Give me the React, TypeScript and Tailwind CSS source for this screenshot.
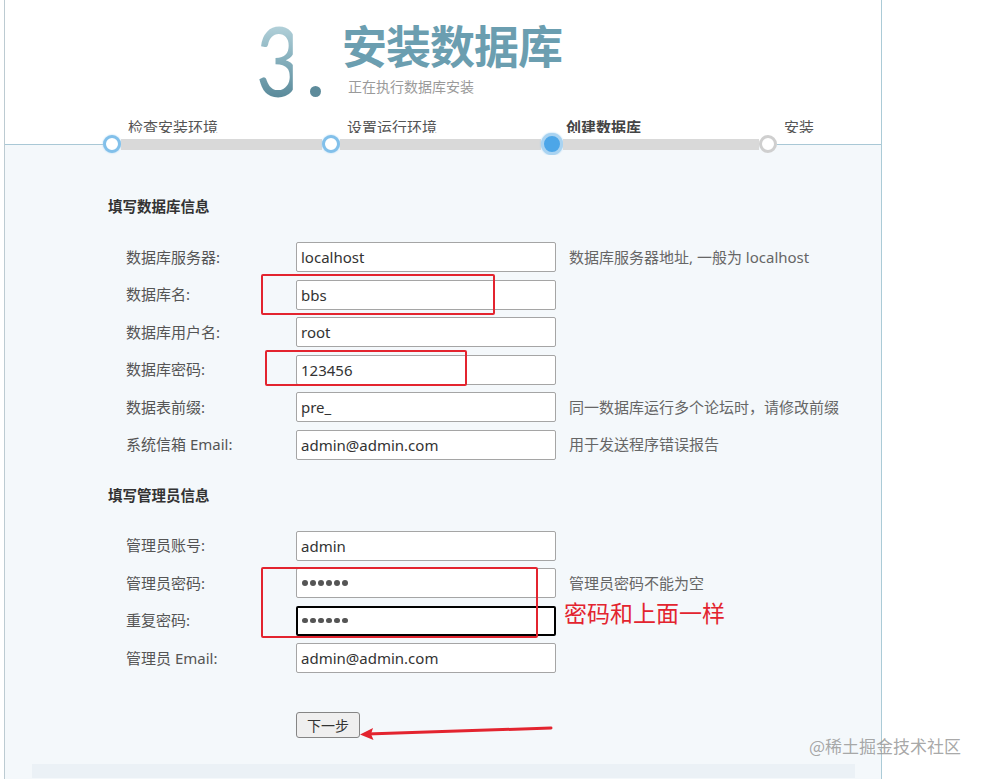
import React from 'react';

const DB_ROWS = [
  { label: '数据库服务器:', value: 'localhost', hint: '数据库服务器地址, 一般为 localhost' },
  { label: '数据库名:', value: 'bbs', hint: '' },
  { label: '数据库用户名:', value: 'root', hint: '' },
  { label: '数据库密码:', value: '123456', hint: '' },
  { label: '数据表前缀:', value: 'pre_', hint: '同一数据库运行多个论坛时，请修改前缀' },
  { label: '系统信箱 Email:', value: 'admin@admin.com', hint: '用于发送程序错误报告' },
];

const ADMIN_ROWS = [
  { label: '管理员账号:', value: 'admin', hint: '', password: false, focused: false },
  { label: '管理员密码:', value: '123456', hint: '管理员密码不能为空', password: true, focused: false },
  { label: '重复密码:', value: '123456', hint: '', password: true, focused: true },
  { label: '管理员 Email:', value: 'admin@admin.com', hint: '', password: false, focused: false },
];

const STEPS = [
  { label: '检查安装环境', w: 'w-[219px]', bold: false },
  { label: '设置运行环境', w: 'w-[219px]', bold: false },
  { label: '创建数据库', w: 'w-[218px]', bold: true },
  { label: '安装', w: 'w-[80px]', bold: false },
];

type Row = { label: string; value: string; hint: string; password?: boolean; focused?: boolean };

function FormRow({ label, value, hint, password, focused }: Row) {
  const box = `w-[260px] h-[30px] bg-white rounded-[2px] flex items-center ${
    focused ? 'border-2 border-black px-[3px]' : 'border border-[#a5a5a5] px-[4px]'
  }`;
  return (
    <div className="flex items-center h-[30px]">
      <span className="w-[170px] text-[15px] text-[#555]">{label}</span>
      {password ? (
        <div className={box} aria-label={label}>
          <div className="flex gap-[2.5px] pl-[1px]">
            {value.split('').map((_, i) => (
              <span key={i} className="w-[5.5px] h-[5.5px] rounded-full bg-[#555]" />
            ))}
          </div>
        </div>
      ) : (
        <input
          readOnly
          type="text"
          defaultValue={value}
          className={`${box} text-[15px] text-[#333] outline-none`}
        />
      )}
      {hint && <span className="ml-[13px] text-[15px] text-[#666]">{hint}</span>}
    </div>
  );
}

function Circle({ kind }: { kind: 'done' | 'active' | 'todo' }) {
  if (kind === 'active')
    return (
      <div className="w-[22px] h-[22px] rounded-full border-[3px] border-[#a9d3f1] bg-[#4ca6e8] shrink-0 shadow-[0_0_2px_#8cc6ee]" />
    );
  if (kind === 'todo')
    return <div className="w-[18px] h-[18px] rounded-full border-[3px] border-[#cfcfcf] bg-white shrink-0" />;
  return (
    <div className="w-[18px] h-[18px] rounded-full border-[3px] border-[#82c0ea] bg-white shrink-0 shadow-[0_0_2px_#9fd0f2]" />
  );
}

export default function App() {
  return (
    <div className="relative w-[987px] h-[779px] overflow-hidden bg-white font-['Noto_Sans','Noto_Sans_CJK_SC',sans-serif]">
      <div className="ml-[4px] w-[878px] h-full border-l border-r border-l-[#bccbd2] border-r-[#abcbd7] flex flex-col">
        {/* Header */}
        <div className="h-[114px] bg-white flex items-start pl-[251px] pt-[11px]">
          <span className="inline-block w-[46px] text-[97px] leading-[97px] font-['Lato',sans-serif] scale-x-[0.8] origin-left bg-gradient-to-b from-[#c6dfe6] via-[#86b0bd] to-[#4e8091] bg-clip-text text-transparent">
            3
          </span>
          <span className="mt-[75px] ml-[8px] w-[11px] h-[11px] rounded-full bg-[#5d8b9b] shrink-0" />
          <div className="ml-[21px] flex flex-col">
            <span className="mt-[10px] text-[45px] leading-[48px] font-bold tracking-[-1px] text-[#6b9eb0] font-['Noto_Sans_CJK_SC',sans-serif]">
              安装数据库
            </span>
            <span className="mt-[8px] ml-[6px] text-[14px] leading-[18px] text-[#9a9a9a] font-['Noto_Sans_CJK_SC',sans-serif]">
              正在执行数据库安装
            </span>
          </div>
        </div>

        {/* Step labels */}
        <div className="flex h-[20px] pl-[123px] bg-white">
          {STEPS.map((s) => (
            <span
              key={s.label}
              className={`${s.w} text-[15px] leading-[26px] ${s.bold ? 'font-bold text-[#444]' : 'text-[#555]'}`}
            >
              {s.label}
            </span>
          ))}
        </div>

        {/* Step bar */}
        <div className="flex items-center h-[22px] -mt-[1px] bg-[linear-gradient(to_bottom,#ffffff_50%,#f4f8fb_50%)]">
          <div className="w-[98px] h-px bg-[#a9c8d6]" />
          <Circle kind="done" />
          <div className="w-[201px] h-[11px] bg-[#d9d9d9]" />
          <Circle kind="done" />
          <div className="w-[201px] h-[11px] bg-[#d9d9d9]" />
          <Circle kind="active" />
          <div className="w-[196px] h-[11px] bg-[#d9d9d9]" />
          <Circle kind="todo" />
          <div className="flex-1 h-px bg-[#a9c8d6]" />
        </div>

        {/* Body */}
        <div className="flex-1 bg-[#f4f8fb] pl-[103px] pt-[41px] flex flex-col">
          <p className="text-[14.5px] leading-[20px] font-bold text-[#333]">填写数据库信息</p>
          <div className="mt-[26px] pl-[18px] flex flex-col gap-[7.5px]">
            {DB_ROWS.map((r) => (
              <FormRow key={r.label} {...r} />
            ))}
          </div>

          <p className="mt-[25px] text-[14.5px] leading-[20px] font-bold text-[#333]">填写管理员信息</p>
          <div className="mt-[26px] pl-[18px] flex flex-col gap-[7.5px]">
            {ADMIN_ROWS.map((r) => (
              <FormRow key={r.label} {...r} />
            ))}
          </div>

          <div className="mt-[39px] pl-[188px]">
            <button className="w-[64px] h-[26px] bg-[#efefef] border border-[#858585] rounded-[3px] text-[14px] text-[#333] font-['Noto_Sans_CJK_SC',sans-serif]">
              下一步
            </button>
          </div>

          <div className="mt-[26px] -ml-[76px] w-[823px] h-[14px] bg-[#ebf1f6]" />
        </div>
      </div>

      {/* Annotations */}
      <div className="absolute left-[261px] top-[274px] w-[234px] h-[41px] border-2 border-[#e3242f] rounded-[2px]" />
      <div className="absolute left-[265px] top-[350px] w-[202px] h-[36px] border-2 border-[#e3242f] rounded-[2px]" />
      <div className="absolute left-[261px] top-[567px] w-[277px] h-[71px] border-2 border-[#e3242f] rounded-[2px]" />
      <span className="absolute left-[564px] top-[597px] text-[23px] leading-[30px] text-[#e3242f] font-['Noto_Sans_CJK_SC',sans-serif]">
        密码和上面一样
      </span>
      <svg className="absolute left-[355px] top-[718px]" width="205" height="26" viewBox="0 0 205 26">
        <line x1="196" y1="10" x2="12" y2="16" stroke="#e3242f" strokeWidth="3" strokeLinecap="round" />
        <polygon points="5,16.5 18,10 16,16 18.5,22" fill="#e3242f" />
      </svg>
      <span className="absolute left-[809px] top-[734px] text-[17px] leading-[24px] text-[#9d9d9d]/90 font-['Noto_Sans_CJK_SC',sans-serif]">
        @稀土掘金技术社区
      </span>
    </div>
  );
}
